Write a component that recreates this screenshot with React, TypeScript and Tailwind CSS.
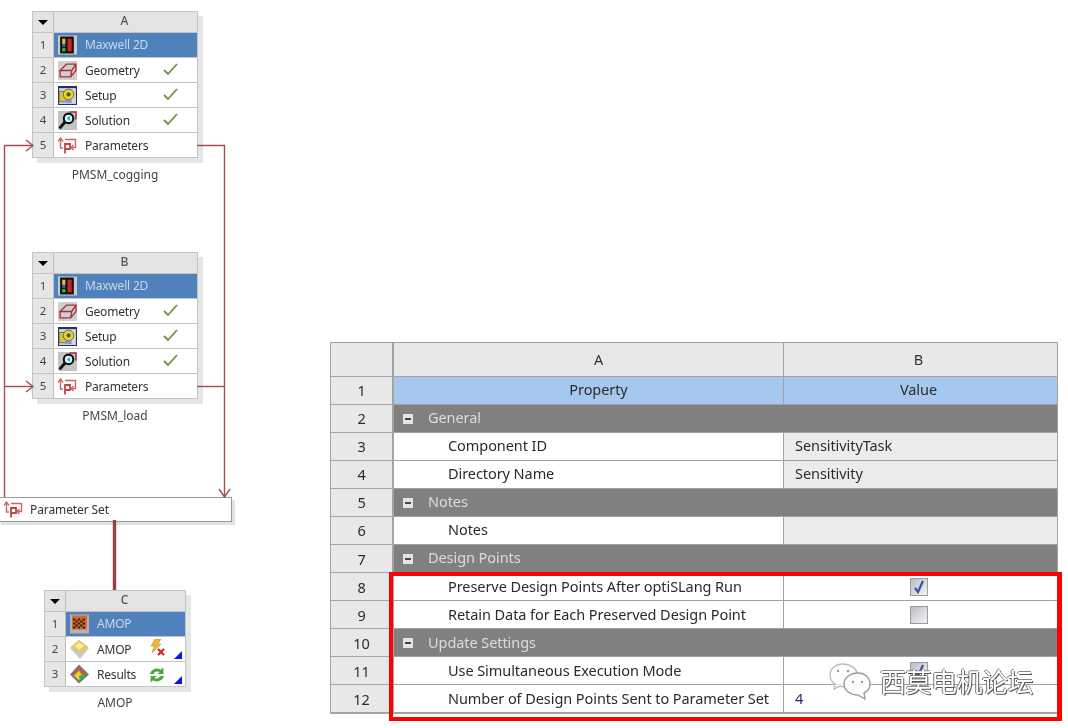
import React from "react";

const font = "font-['Noto_Sans','Liberation_Sans',sans-serif]";

function MaxwellIcon() {
  return (
    <svg width="19" height="20" viewBox="0 0 18 18">
      <rect x="0" y="0" width="18" height="18" fill="#c9c9c9" />
      <rect x="2" y="1" width="13" height="16" fill="#111" />
      <rect x="4" y="3" width="3" height="5" fill="#e3c21d" />
      <rect x="4" y="8" width="3" height="3" fill="#2a5fd0" />
      <rect x="4" y="12" width="3" height="3" fill="#3fbf3a" />
      <rect x="9" y="3" width="4" height="12" fill="#c8261f" />
    </svg>
  );
}

function GeometryIcon() {
  return (
    <svg width="19" height="19" viewBox="0 0 18 18" fill="none">
      <rect x="0" y="0" width="18" height="18" fill="#cfcfcf" />
      <path d="M2 9 L8 3 H17 L13 9 H2 Z M2 9 V15 H12 L13 9 M12 15 L17 9 V3" stroke="#a5343a" strokeWidth="1.3" />
    </svg>
  );
}

function SetupIcon() {
  return (
    <svg width="19" height="19" viewBox="0 0 18 18" fill="none">
      <rect x="0" y="0" width="18" height="18" fill="#1d2f7a" />
      <rect x="1" y="2" width="16" height="15" fill="#d6d6d6" />
      <rect x="1" y="5" width="7" height="10" fill="#d3c63a" stroke="#555" strokeWidth="0.7" />
      <circle cx="10" cy="8" r="5" fill="#e8d820" stroke="#555" strokeWidth="0.8" />
      <circle cx="10" cy="8" r="2" fill="#555" />
      <rect x="7" y="13" width="6" height="3" fill="#8f8fe0" />
    </svg>
  );
}

function SolutionIcon() {
  return (
    <svg width="19" height="19" viewBox="0 0 18 18" fill="none">
      <rect x="0" y="0" width="18" height="18" fill="#c4c4c4" />
      <path d="M11 1 H17 V8" stroke="#a5343a" strokeWidth="1.4" />
      <circle cx="10" cy="7" r="4.5" fill="#dff" stroke="#111" strokeWidth="2" />
      <path d="M7 10 L1.5 16.5" stroke="#111" strokeWidth="2.8" />
      <path d="M8 7 L11.5 4.5 V9.5 Z" fill="#21b8d8" />
    </svg>
  );
}

function ParamIcon() {
  return (
    <svg width="19" height="17" viewBox="0 0 19 17" fill="none" stroke="#cf6466" strokeWidth="1.4">
      <path d="M2.5 2 V11 H5" />
      <path d="M0 4.5 L2.5 1 L5 4.5" />
      <path d="M7 2.5 H17.5 V10.5 H14" />
      <path d="M15.5 8 L13 10.5 L15.5 13" />
      <path d="M7 16.5 V7 H12 V12 H7" strokeWidth="1.8" stroke="#b9474a" />
    </svg>
  );
}

function CheckIcon() {
  return (
    <svg width="15" height="13" viewBox="0 0 15 13" fill="none">
      <path d="M1 7 L5 11 L14 1" stroke="#6f8f4c" strokeWidth="1.8" />
    </svg>
  );
}

function FlagIcon() {
  return (
    <svg width="19" height="20" viewBox="0 0 19 19">
      <rect width="19" height="19" fill="#b9b2ac" />
      <rect x="2" y="1" width="15" height="14" fill="#d9682a" />
      <g fill="#222">
        {[0, 1, 2, 3, 4].flatMap((r) =>
          [0, 1, 2, 3, 4].map((c) =>
            (r + c) % 2 === 0 ? <rect key={`${r}-${c}`} x={3 + c * 2.4} y={4 + r * 2} width="2.4" height="2" /> : null,
          ),
        )}
      </g>
    </svg>
  );
}

function GemIcon() {
  return (
    <svg width="20" height="19" viewBox="0 0 19 19">
      <path d="M0 8 L9 0 L19 8 L10 19 Z" fill="#c9c9c9" />
      <path d="M1 7 L9 0 L18 7 L10 13 Z" fill="#ecc653" />
      <path d="M5 6 L9 2.5 L14 6 L9 10 Z" fill="#fbeeb0" />
    </svg>
  );
}

function ResultsIcon() {
  return (
    <svg width="20" height="20" viewBox="0 0 19 19">
      <path d="M9 0 L19 10 L9 19 L0 10 Z" fill="#777" />
      <path d="M9 3 L16 10 L10 16 L4 11 Z" fill="#e54a2c" />
      <path d="M4 11 L9 6 L12 11 L9 16 Z" fill="#e8d52c" />
      <path d="M9 12 L13 9 L16 11 L10 16 Z" fill="#35b24a" />
    </svg>
  );
}

function BoltX() {
  return (
    <svg width="16" height="18" viewBox="0 0 16 18">
      <path d="M6 0 H12 L9 5 H12 L3 14 L5 7 H2 Z" fill="#e8b93a" stroke="#b58a25" strokeWidth="0.5" />
      <path d="M9 10 L15 16 M15 10 L9 16" stroke="#e0202a" strokeWidth="2.2" />
    </svg>
  );
}

function Refresh() {
  return (
    <svg width="16" height="16" viewBox="0 0 15 15" fill="none">
      <path d="M1 6.5 C2 2 8 0 11 2.5 L13.5 0.5 V6.5 H8 L10 4.8 C8 3.8 5 4.2 4.5 6.5 Z" fill="#48a838" />
      <path d="M14 8.5 C13 13 7 15 4 12.5 L1.5 14.5 V8.5 H7 L5 10.2 C7 11.2 10 10.8 10.5 8.5 Z" fill="#48a838" />
    </svg>
  );
}

function Corner() {
  return <div className="absolute right-[3px] bottom-[2px] w-0 h-0 border-l-[8px] border-l-transparent border-b-[8px] border-b-[#0a14e6]" />;
}

type SysRow = { icon: React.ReactNode; label: string; status?: React.ReactNode; corner?: boolean };

function System({
  letter,
  rows,
  caption,
  width,
  captionGap,
  statusRight,
  className,
}: {
  letter: string;
  rows: SysRow[];
  caption: string;
  width: string;
  captionGap: string;
  statusRight: string;
  className: string;
}) {
  return (
    <div className={`absolute ${className} ${width}`}>
      <div className="border border-[#c4c4c4] bg-white text-[12px] leading-none text-[#333] shadow-[5px_5px_0_#e6e6e6]">
        <div className="flex h-[20px] bg-[#e3e3e3]">
          <div className="w-[21px] flex items-center justify-center border-r border-[#bdbdbd]">
            <div className="w-0 h-0 border-l-[5px] border-r-[5px] border-t-[5px] border-l-transparent border-r-transparent border-t-black" />
          </div>
          <div className="flex-1 flex items-center justify-center pb-[2px] pr-[2px] text-[#555] text-[12px] font-medium">{letter}</div>
        </div>
        {rows.map((r, i) => (
          <div key={i} className="flex h-[25px] border-t border-[#c4c4c4]">
            <div className="w-[21px] shrink-0 bg-[#e6e6e6] border-r border-[#bdbdbd] flex items-center justify-center text-[#444] text-[11.5px]">
              {i + 1}
            </div>
            <div className={`flex-1 relative flex items-center ${i === 0 ? "bg-[#4f81bd] text-[#c8d8ee]" : "bg-white text-[#333]"}`}>
              <div className="ml-[4px] w-[19px] flex justify-center">{r.icon}</div>
              <span className={`ml-[8px] text-[12px] tracking-[-0.2px] ${i === 0 ? "" : "pt-[2px]"}`}>{r.label}</span>
              {r.status && <div className={`absolute ${statusRight} top-[5px]`}>{r.status}</div>}
              {r.corner && <Corner />}
            </div>
          </div>
        ))}
      </div>
      <div className={`text-center ${captionGap} text-[12px] leading-none text-[#444]`}>{caption}</div>
    </div>
  );
}

const maxwellRows: SysRow[] = [
  { icon: <MaxwellIcon />, label: "Maxwell 2D" },
  { icon: <GeometryIcon />, label: "Geometry", status: <CheckIcon /> },
  { icon: <SetupIcon />, label: "Setup", status: <CheckIcon /> },
  { icon: <SolutionIcon />, label: "Solution", status: <CheckIcon /> },
  { icon: <ParamIcon />, label: "Parameters" },
];

const amopRows: SysRow[] = [
  { icon: <FlagIcon />, label: "AMOP" },
  {
    icon: <GemIcon />,
    label: "AMOP",
    status: (
      <div className="-mt-[3px]">
        <BoltX />
      </div>
    ),
    corner: true,
  },
  { icon: <ResultsIcon />, label: "Results", status: <Refresh />, corner: true },
];

type Row = { kind: "head" | "group" | "item"; a: string; b?: React.ReactNode };

const tableRows: Row[] = [
  { kind: "head", a: "Property", b: "Value" },
  { kind: "group", a: "General" },
  { kind: "item", a: "Component ID", b: "SensitivityTask" },
  { kind: "item", a: "Directory Name", b: "Sensitivity" },
  { kind: "group", a: "Notes" },
  { kind: "item", a: "Notes", b: "" },
  { kind: "group", a: "Design Points" },
  { kind: "item", a: "Preserve Design Points After optiSLang Run", b: <Check on /> },
  { kind: "item", a: "Retain Data for Each Preserved Design Point", b: <Check /> },
  { kind: "group", a: "Update Settings" },
  { kind: "item", a: "Use Simultaneous Execution Mode", b: <Check on /> },
  { kind: "item", a: "Number of Design Points Sent to Parameter Set", b: "4" },
];

function Check({ on }: { on?: boolean }) {
  return (
    <div className="w-[18px] h-[18px] border border-[#9c9c9c] bg-gradient-to-br from-[#bcbcc6] to-[#f5f5f5] flex items-center justify-center mx-auto">
      {on && (
        <svg width="14" height="14" viewBox="0 0 14 14" fill="none">
          <path d="M3 8 L6 12 L11 1" stroke="#3552a8" strokeWidth="2.2" />
        </svg>
      )}
    </div>
  );
}

function Table() {
  const num = "w-[63px] shrink-0 bg-[#e8e8e8] border-r-2 border-[#a3a3a3] flex items-center justify-center";
  return (
    <div className="w-[728px] border-t border-l border-r border-b-2 border-[#a3a3a3] text-[14.5px] leading-none tracking-[-0.07px] text-[#2b2b2b]">
      <div className="flex h-[33px]">
        <div className={num} />
        <div className="w-[390px] shrink-0 bg-[#e8e8e8] border-r border-[#a3a3a3] flex items-center justify-center pl-[20px] pb-[1px] text-[#333]">A</div>
        <div className="flex-1 bg-[#e8e8e8] flex items-center justify-center pr-[4px] pb-[1px] text-[#333]">B</div>
      </div>
      {tableRows.map((r, i) => (
        <div key={i} className="flex h-[28px] border-t border-[#a3a3a3]">
          <div className={`${num} ${i >= 6 ? "pt-[1px]" : ""}`}>{i + 1}</div>
          {r.kind === "head" && (
            <>
              <div className="w-[390px] shrink-0 bg-[#a6c8ee] border-r border-[#a3a3a3] flex items-center justify-center pl-[20px] pb-[2px]">{r.a}</div>
              <div className="flex-1 bg-[#a6c8ee] flex items-center justify-center pr-[4px] pb-[2px]">{r.b}</div>
            </>
          )}
          {r.kind === "group" && (
            <div className="flex-1 bg-[#808080] flex items-center text-[#dcdcdc]">
              <div className="ml-[9px] w-[10px] h-[10px] bg-[#e4e4e4] flex items-center justify-center">
                <div className="w-[6px] h-[2px] bg-[#444]" />
              </div>
              <span className={`ml-[15px] ${i >= 7 ? "pb-[1px]" : "pb-[2px]"}`}>{r.a}</span>
            </div>
          )}
          {r.kind === "item" && (
            <>
              <div className={`w-[390px] shrink-0 bg-white border-r border-[#a3a3a3] flex items-center pl-[54px] ${i >= 7 ? "pb-[1px]" : "pb-[2px]"}`}>{r.a}</div>
              <div
                className={`flex-1 flex items-center pl-[11px] pr-[14px] ${typeof r.b === "string" && i < 6 ? "bg-[#ececec] pb-[2px]" : "bg-white"} ${r.b === "4" ? "text-[#1f2f70] pb-[1px]" : ""}`}
              >
                {r.b}
              </div>
            </>
          )}
        </div>
      ))}
    </div>
  );
}

function Connectors() {
  const c = "#a54d4f";
  return (
    <svg className="absolute left-0 top-0" width="330" height="600" fill="none">
      <path d="M4.5 497 V145.5 H32" stroke={c} strokeWidth="1.4" />
      <path d="M4.5 386.5 H32" stroke={c} strokeWidth="1.4" />
      <path d="M26 140 L33 145.5 L26 151 M26 381 L33 386.5 L26 392" stroke={c} strokeWidth="1.4" />
      <path d="M197 145.5 H224.5 V497" stroke={c} strokeWidth="1.4" />
      <path d="M197 386.5 H224.5" stroke={c} strokeWidth="1.4" />
      <path d="M219 489 L224.5 497 L230 489" stroke={c} strokeWidth="1.4" />
      <path d="M114.5 520 V590" stroke="#9a3f42" strokeWidth="3.4" />
    </svg>
  );
}

function Watermark() {
  return (
    <div className="absolute left-[829px] top-[662px] flex items-center">
      <svg width="44" height="38" viewBox="0 0 44 38" fill="none" stroke="#fff" strokeWidth="1.4">
        <path d="M14 2 C6 2 1 7 1 13 C1 17 3 20 6 22 L5 27 L11 24 C13 25 15 25 17 25" fill="#ffffffcc" stroke="#bdbdbd" />
        <path d="M14 2 C21 2 27 6 28 11" stroke="#bdbdbd" />
        <path d="M29 11 C21 11 15 16 15 22 C15 28 21 33 29 33 L36 37 L35 31 C39 29 41 26 41 22 C41 16 36 11 29 11 Z" fill="#ffffffe0" stroke="#9c9c9c" />
        <circle cx="24" cy="20" r="1.2" fill="#999" stroke="none" />
        <circle cx="33" cy="20" r="1.2" fill="#999" stroke="none" />
        <circle cx="9" cy="9" r="1.2" fill="#999" stroke="none" />
        <circle cx="19" cy="9" r="1.2" fill="#999" stroke="none" />
      </svg>
      <span className="ml-[7px] text-[26px] leading-none tracking-[-0.5px] text-white font-['Noto_Sans_CJK_SC',sans-serif] [text-shadow:1px_1px_0_#555,-1px_0_0_#777,0_-1px_0_#888]">
        西莫电机论坛
      </span>
    </div>
  );
}

export default function App() {
  return (
    <div className={`relative flex w-[1068px] h-[728px] overflow-hidden bg-white blur-[0.35px] ${font}`}>
      <div className="relative w-[330px] h-full shrink-0">
        <System letter="A" rows={maxwellRows} caption="PMSM_cogging" width="w-[166px]" captionGap="mt-[11px]" statusRight="right-[19px]" className="left-[32px] top-[11px]" />
        <System letter="B" rows={maxwellRows} caption="PMSM_load" width="w-[166px]" captionGap="mt-[11px]" statusRight="right-[19px]" className="left-[32px] top-[252px]" />
        <div className="absolute left-[-2px] top-[497px] w-[234px] h-[25px] border border-[#9a9a9a] bg-white flex items-center shadow-[3px_3px_0_#e2e2e2]">
          <div className="ml-[5px]">
            <ParamIcon />
          </div>
          <span className="ml-[7px] text-[12px] leading-none text-[#333] tracking-[-0.1px]">Parameter Set</span>
        </div>
        <System letter="C" rows={amopRows} caption="AMOP" width="w-[142px]" captionGap="mt-[10px]" statusRight="right-[20px]" className="left-[44px] top-[590px]" />
        <Connectors />
      </div>
      <div className="pt-[342px]">
        <Table />
      </div>
      <div className="absolute left-[389px] top-[572px] w-[673px] h-[149px] border-4 border-r-[5px] border-[#ff0000]" />
      <Watermark />
    </div>
  );
}
